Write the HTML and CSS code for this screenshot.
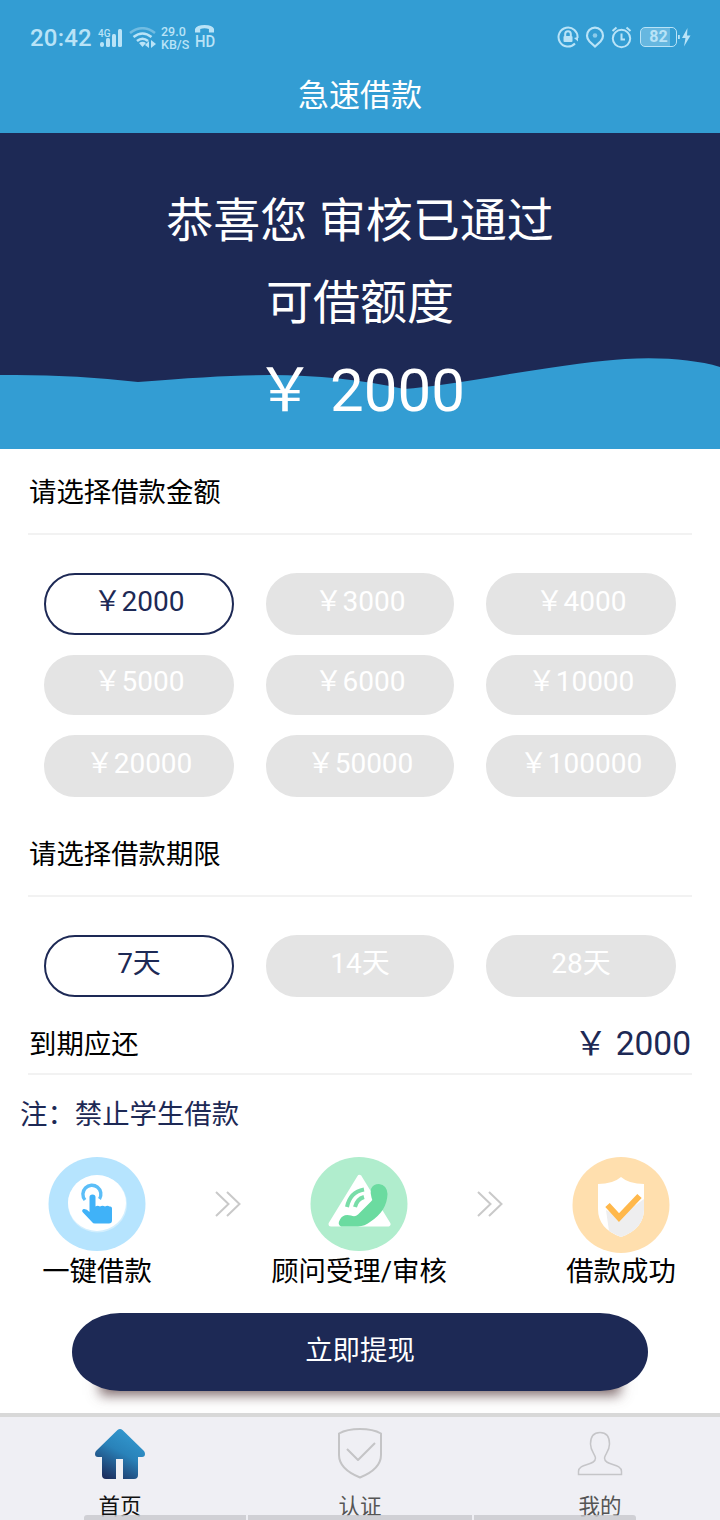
FILE: index.html
```html
<!DOCTYPE html>
<html lang="zh-CN">
<head>
<meta charset="utf-8">
<title>急速借款</title>
<link rel="stylesheet" href="styles.css">
</head>
<body>
<div class="app">
  <header class="header">
    <div class="status">
      <div class="status-left">
        <span class="clock">20:42</span>
        <svg class="signal" width="26" height="24" viewBox="0 0 26 24" fill="#b9e3f7"><text x="0" y="9.5" class="tiny">4G</text><rect x="2" y="15" width="4" height="5" rx="2"/><rect x="8" y="11" width="4" height="9" rx="1.5"/><rect x="14" y="7" width="4" height="13" rx="1.5"/><rect x="20" y="2" width="4" height="18" rx="1.5"/></svg>
        <svg class="wifi" width="28" height="24" viewBox="0 0 28 24" fill="none" stroke="#b9e3f7" stroke-width="2.6"><path d="M1 6Q13.500 -3.500 26 6" stroke="#71bce2"/><path d="M4.500 10Q13.500 3 22.500 10M8 14Q13.500 9.500 19 14"/><path d="M10 16q3.500-2.500 7 0l-3.500 4z" fill="#b9e3f7" stroke="none"/><path d="M16 18l4-4v7zM22 13l5 4-5 4z" fill="#b9e3f7" stroke="none"/></svg>
        <span class="speed"><span>29.0</span><span>KB/S</span></span>
        <span class="hd"><svg width="22" height="8" viewBox="0 0 22 8"><path d="M0 7.500V4Q2 0 11 0T22 4V7.500H16V4Q11 2.500 6 4V7.500Z" fill="#b9e3f7"/></svg><span>HD</span></span>
      </div>
      <div class="status-right">
        <svg width="22" height="22" viewBox="0 0 22 22" fill="none" stroke="#b9e3f7" stroke-width="2"><path d="M18 17.500A9.500 9.500 0 1 1 20.500 12"/><path d="M17 12l4 3.500V11z" fill="#b9e3f7" stroke="none"/><rect x="6.500" y="10" width="9" height="6" rx="1" fill="#b9e3f7" stroke="none"/><path d="M8.200 10V8a2.800 2.800 0 0 1 5.600 0v2"/></svg>
        <svg width="20" height="22" viewBox="0 0 20 22"><path d="M4.500 15.500A8 8 0 1 1 15.500 15.500L10 20.500Z" fill="none" stroke="#b9e3f7" stroke-width="2.200"/><circle cx="10" cy="9.500" r="2.300" fill="#8ccbea"/></svg>
        <svg width="21" height="23" viewBox="0 0 21 23" fill="none" stroke="#b9e3f7" stroke-width="2"><circle cx="10.500" cy="12.500" r="8.700"/><path d="M10.500 7.500v6H14M1.500 5L5.500 1.500M19.500 5L15.500 1.500"/></svg>
        <span class="battery">82</span>
        <svg width="13" height="20" viewBox="0 0 13 20" fill="#b9e3f7"><path d="M0 8h1.800v4H0z"/><path d="M9.500 1L4 11h3.500L6 19.500 12.500 8.500H9z"/></svg>
      </div>
    </div>
    <h1 class="title">急速借款</h1>
  </header>

  <section class="hero">
    <svg class="wave" width="720" height="92" viewBox="0 0 720 92"><path d="M0 18Q70 17 138 25Q220 18 270 18Q340 18 404 32Q440 29 504 18Q590 4 625 2Q682-1 720 10V92H0Z" fill="#339dd3"/></svg>
    <p class="hero-line">恭喜您 审核已通过</p>
    <p class="hero-line">可借额度</p>
    <p class="hero-amount">￥ 2000</p>
  </section>

  <main class="main">
    <h2 class="section-title">请选择借款金额</h2>
    <div class="chips">
      <button class="chip chip-on">￥2000</button><button class="chip">￥3000</button><button class="chip">￥4000</button>
      <button class="chip chip-short">￥5000</button><button class="chip chip-short">￥6000</button><button class="chip chip-short">￥10000</button>
      <button class="chip">￥20000</button><button class="chip">￥50000</button><button class="chip">￥100000</button>
    </div>
    <h2 class="section-title">请选择借款期限</h2>
    <div class="chips chips-term">
      <button class="chip chip-on">7天</button><button class="chip">14天</button><button class="chip">28天</button>
    </div>
    <div class="repay"><span class="repay-label">到期应还</span><span class="repay-sum">￥ 2000</span></div>
    <p class="note">注：禁止学生借款</p>

    <div class="steps">
      <div class="step">
        <svg width="98" height="96" viewBox="0 0 98 96"><ellipse cx="49" cy="47" rx="48.500" ry="47" fill="#b6e4fe"/><ellipse cx="49.500" cy="47" rx="29.500" ry="28.500" fill="#d3effe"/><ellipse cx="49" cy="46" rx="29" ry="28" fill="#fff"/><path d="M37 43A9 9 0 1 1 51.500 42" fill="none" stroke="#5bbef8" stroke-width="3.400"/><path d="M41.500 40q0-2.500 3-2.500t3 2.500v9.500q2-1.500 4.500 0 2.500-1.500 5 0 2.500-1.500 4.500 0 2.500-.5 2.500 2v12q0 3-3 3H47q-2 0-3-1.500l-9-9.500q-2-2 .5-3.500 3-.5 6 3z" fill="#40b2f8"/></svg>
        <span>一键借款</span>
      </div>
      <svg class="arrows" width="28" height="28" viewBox="0 0 28 28"><path d="M2 2l12.500 12L2 26M13 2l12.500 12L13 26" fill="none" stroke="#c9c9c9" stroke-width="2"/></svg>
      <div class="step step-mid">
        <svg width="98" height="96" viewBox="0 0 98 96"><ellipse cx="49" cy="47" rx="48.500" ry="47" fill="#b0edcd"/><path d="M49.500 20.500L78 67H21z" fill="#fff" stroke="#fff" stroke-width="5" stroke-linejoin="round"/><path d="M61 32q2-5 8-5 8 1 8.500 10Q77 54 60 65q-5 4-12 4.500H31q-4-2-1-7 3-6 11-4 4 2 7-1l13-13q2-2 .5-4-1.500-4-.5-8.500z" fill="#6bdba0"/><path d="M37 50Q40 35 54 32.500M45 50Q47 42 54 40" fill="none" stroke="#79dda8" stroke-width="4"/></svg>
        <span>顾问受理/审核</span>
      </div>
      <svg class="arrows arrows-last" width="28" height="28" viewBox="0 0 28 28"><path d="M2 2l12.500 12L2 26M13 2l12.500 12L13 26" fill="none" stroke="#c9c9c9" stroke-width="2"/></svg>
      <div class="step">
        <svg width="98" height="96" viewBox="0 0 98 96"><ellipse cx="49" cy="48" rx="48.500" ry="48" fill="#ffdfae"/><path d="M49 20Q57 27 72 27V52Q72 72 49 80Q26 72 26 52V27Q41 27 49 20Z" fill="#fff"/><path d="M34 53L47 60 72 42V52Q72 72 49 80Q42 77 37 74Z" fill="#eeeeef"/><path d="M35.500 48L47 60.500 67.500 39" fill="none" stroke="#ffb84b" stroke-width="6"/></svg>
        <span>借款成功</span>
      </div>
    </div>
    <div class="submit-wrap"><button class="submit">立即提现</button></div>
  </main>

  <nav class="tabs">
    <a class="tab tab-on">
      <svg width="50" height="52" viewBox="0 0 50 52"><defs><linearGradient id="home" x1="0.750" y1="0" x2="0.200" y2="1"><stop offset="0.050" stop-color="#3298cf"/><stop offset="0.450" stop-color="#2982b9"/><stop offset="1" stop-color="#1c2b5b"/></linearGradient></defs><path d="M22.500 2q2.500-2 5 0L49 23q1 1.500 1 3 0 3-3 3H43v18q0 4-4 4H28V31H21v20H11q-4 0-4-4V29H3q-3 0-3-3 0-1.500 1-3z" fill="url(#home)"/></svg>
      <span>首页</span>
    </a>
    <a class="tab">
      <svg width="50" height="52" viewBox="0 0 50 52" fill="none" stroke="#c4c4c6" stroke-width="2"><path d="M25 1Q38 1 46 5.500V27Q46 41 25 49.500Q4 41 4 27V5.500Q12 1 25 1ZM12 21L23 32 40 15" stroke-linejoin="round"/></svg>
      <span>认证</span>
    </a>
    <a class="tab">
      <svg width="50" height="52" viewBox="0 0 50 52" fill="none" stroke="#c5c5c8" stroke-width="1.500"><path d="M25 4.500C18 4.500 15.500 9 15.500 16C15.500 23 20 26 20.500 30C20.500 38 3.500 35 3.500 43.500V46.500H46.500V43.500C46.500 35 29.500 38 29.500 30C30 26 34.500 23 34.500 16C34.500 9 32 4.500 25 4.500Z"/></svg>
      <span>我的</span>
    </a>
    <div class="gesture"><i></i><i class="wide"></i><i></i></div>
  </nav>
</div>
</body>
</html>
```

FILE: styles.css
```css
* { box-sizing: border-box; }
body { margin: 0; font-family: Roboto, "Noto Sans CJK SC", sans-serif; color: #000; background: #fff; }
h1, h2, p { margin: 0; font-weight: 400; }
button { border: 0; padding: 0; margin: 0; font-family: inherit; }
svg { display: block; flex: none; }
.app { width: 720px; height: 1520px; display: flex; flex-direction: column; overflow: hidden; }

.header { height: 133px; flex: none; background: #339dd3; color: #fff; }
.status { height: 74px; padding: 0 29px 0 30px; display: flex; justify-content: space-between; align-items: center; color: #b9e3f7; }
.status-left, .status-right { display: flex; align-items: center; }
.clock { width: 68px; font-size: 24px; font-weight: 500; letter-spacing: 0.2px; line-height: 28px; padding-top: 2px; }
.tiny { font-size: 10px; font-weight: 500; }
.signal { margin-bottom: -3px; }
.wifi { margin: 4px 4px 0 5px; }
.speed { width: 34px; display: flex; flex-direction: column; font-size: 12.5px; font-weight: 500; line-height: 13px; padding-top: 1px; }
.hd { display: flex; flex-direction: column; font-size: 17px; font-weight: 500; line-height: 16px; transform: scaleX(0.87); transform-origin: left; }
.status-right { gap: 6px; }
.battery { width: 37px; height: 20px; border: 1.5px solid #b9e3f7; border-radius: 5px; background: linear-gradient(90deg, #66b7e0 82%, transparent 82%); text-align: center; font-size: 16px; font-weight: 700; line-height: 18px; margin: 0 -5px 0 2px; }
.title { height: 44px; line-height: 44px; text-align: center; font-size: 31px; }

.hero { position: relative; height: 316px; flex: none; padding-top: 46px; background: #1d2955; color: #fff; text-align: center; }
.wave { position: absolute; left: 0; bottom: 0; }
.hero-line { position: relative; height: 82px; line-height: 83px; font-size: 47px; }
.hero-amount { position: relative; height: 96px; line-height: 96px; font-size: 60px; }

.main { height: 964px; flex: none; }
.section-title { margin: 0 28px; padding-left: 1px; height: 86px; line-height: 88px; border-bottom: 2px solid #f2f2f2; font-size: 27.4px; }
.chips { display: grid; grid-template-columns: 190px 188px 190px; grid-template-rows: 62px 60px 62px; column-gap: 32px; row-gap: 20px; padding: 38px 44px 14px; }
.chips-term { grid-template-rows: 62px; padding-bottom: 16px; }
.chip { border: 2px solid #e4e4e4; border-radius: 31px; background: #e4e4e4; color: #fff; font-size: 28px; line-height: 50px; padding-bottom: 4px; }
.chip-short { padding-bottom: 6px; }
.chip-on { border-color: #1d2955; background: #fff; color: #1d2955; }
.repay { margin: 0 28px; padding: 0 1px; height: 62px; border-bottom: 2px solid #f2f2f2; display: flex; justify-content: space-between; font-size: 27.4px; line-height: 61px; }
.repay-label { line-height: 64px; }
.repay-sum { color: #1d2955; font-size: 33.5px; }
.note { padding-left: 20px; height: 82px; line-height: 81px; font-size: 27.4px; color: #1d2955; }

.steps { display: flex; padding: 0 24px 0 22px; height: 156px; }
.step { width: 150px; display: flex; flex-direction: column; align-items: center; font-size: 27.4px; line-height: 39px; white-space: nowrap; }
.step-mid { width: 180px; }
.arrows { margin: 33px 27px 0 42px; }
.arrows-last { margin: 33px 42px 0 27px; }
.submit-wrap { position: relative; z-index: 0; width: 576px; margin: 0 auto; }
.submit-wrap::before { content: ""; position: absolute; z-index: -1; left: 28px; right: 28px; top: 30px; bottom: 6px; box-shadow: 0 10px 12px #5b4144cc; }
.submit { display: block; width: 576px; height: 78px; padding-bottom: 8px; border-radius: 48px / 39px; background: #1d2955; color: #fff; font-size: 27.4px; }

.tabs { position: relative; height: 107px; flex: none; display: grid; grid-template-columns: repeat(3, 1fr); border-top: 4px solid #d8d8d8; background: #efeff4; }
.tab { display: flex; flex-direction: column; align-items: center; padding-top: 11px; font-size: 21.5px; line-height: 30px; gap: 12px; color: #555; }
.tab-on { color: #111; }
.gesture { position: absolute; left: 84px; bottom: 0; display: flex; gap: 2px; }
.gesture i { width: 162px; height: 5px; background: #c8c8cdcc; }
.gesture .wide { width: 224px; }
.gesture i:first-child { border-top-left-radius: 3px; }
.gesture i:last-child { border-top-right-radius: 3px; }
```
